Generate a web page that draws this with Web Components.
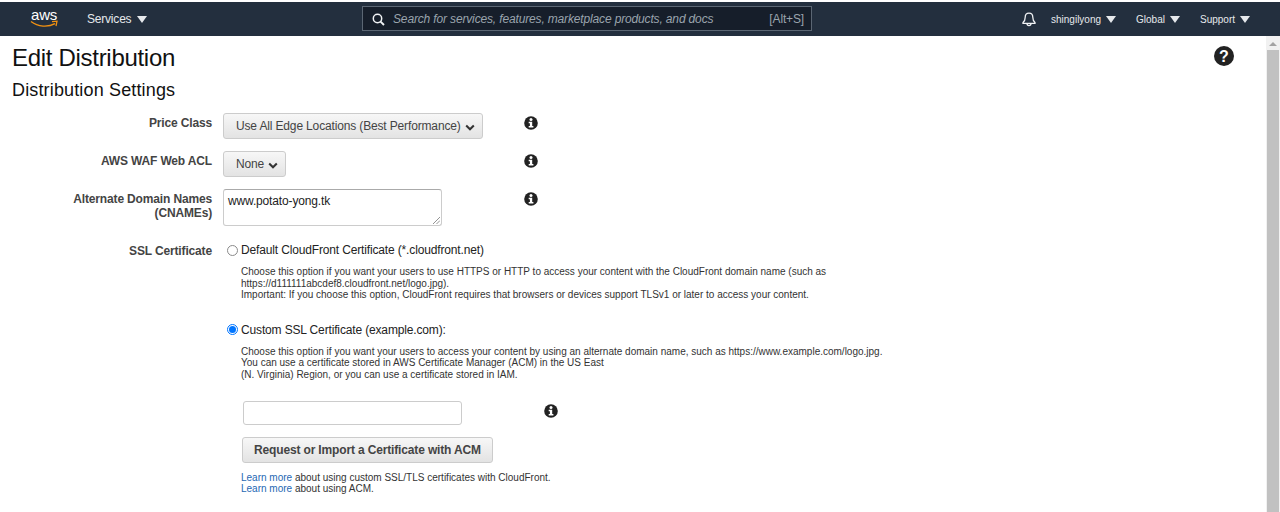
<!DOCTYPE html>
<html>
<head>
<meta charset="utf-8">
<title>Edit Distribution</title>
<style>
  html, body { margin: 0; height: 512px; overflow: hidden; background: #fff; }
  body { font-family: "Liberation Sans", Arial, sans-serif; display: flex; flex-direction: column; padding-top: 2px; box-sizing: border-box; }
</style>
</head>
<body>
<aws-nav></aws-nav>
<page-shell>
  <page-title></page-title>
  <form-row label="Price Class"><aws-select>Use All Edge Locations (Best Performance)</aws-select></form-row>
  <form-row label="AWS WAF Web ACL"><aws-select>None</aws-select></form-row>
  <form-row label="Alternate Domain Names (CNAMEs)"><cname-box>www.potato-yong.tk</cname-box></form-row>
  <ssl-section></ssl-section>
</page-shell>

<script>
const infoSvg = `<svg width="14" height="14" viewBox="0 0 14 14"><circle cx="7" cy="7" r="6.8" fill="#222"/><circle cx="7" cy="3.5" r="1.5" fill="#fff"/><path d="M4.7 5.8H8.2V10H9.4V11.5H4.7V10H5.900V7.300H4.700Z" fill="#fff"/></svg>`;
const caretSvg = `<svg width="10" height="7" viewBox="0 0 10 7"><path d="M1.2 1.6 5 5.2 8.8 1.6" fill="none" stroke="#333" stroke-width="2.1"/></svg>`;

class NavMenu extends HTMLElement {
  constructor() {
    super();
    this.attachShadow({ mode: "open" }).innerHTML = `
      <style>
        :host { display: inline-flex; align-items: center; gap: var(--menu-gap, 5px); color: #e6e9ec; font-size: var(--menu-size, 10px); letter-spacing: var(--menu-track, 0); }
        i { width: 0; height: 0; border-left: 5px solid transparent; border-right: 5px solid transparent; border-top: 7px solid #e6e9ec; margin-top: 1px; }
      </style>
      <slot></slot><i></i>`;
  }
}

class AwsNav extends HTMLElement {
  constructor() {
    super();
    this.attachShadow({ mode: "open" }).innerHTML = `
      <style>
        :host { display: flex; align-items: center; height: 34px; background: #232f3e; flex: none; position: relative; }
        .logo { margin-left: 30px; width: 30px; display: block; position: relative; height: 24px; }
        .logo span { position: absolute; left: 1px; top: 0; color: #fff; font-size: 15px; letter-spacing: -.2px; line-height: 15px; }
        .logo svg { position: absolute; left: 0; top: 13px; }
        .services { margin-left: 27px; --menu-size: 12px; --menu-track: -.2px; --menu-gap: 6px; }
        .search { position: absolute; left: 362px; top: 4px; width: 450px; height: 25px; box-sizing: border-box; border: 1px solid #5b6673; background: #161e2a; display: flex; align-items: center; padding: 0 7px 0 9px; color: #9aa4ad; font-size: 12px; letter-spacing: -.15px; }
        .search svg { margin: 2px 8px 0 0; }
        .search em { flex: 1; }
        .right { margin-left: auto; display: flex; align-items: center; }
        .bell { margin-right: 15px; display: block; }
        .gap1 { margin-right: 20px; }
        .gap2 { margin-right: 20px; }
        .gap3 { margin-right: 30px; }
      </style>
      <div class="logo"><span>aws</span>
        <svg width="28" height="9" viewBox="0 0 28 9"><path d="M1 1.5C8 7 18 7.5 25 3.6" fill="none" stroke="#f29111" stroke-width="1.4"/><path d="M22 1.7 27 1.2 26 6" fill="none" stroke="#f29111" stroke-width="1.3"/></svg>
      </div>
      <nav-menu class="services">Services</nav-menu>
      <div class="search">
        <svg width="13" height="13" viewBox="0 0 13 13"><circle cx="5.5" cy="5.5" r="4.2" fill="none" stroke="#f0f2f4" stroke-width="1.5"/><path d="M8.6 8.6 12 12" stroke="#f0f2f4" stroke-width="1.9"/></svg>
        <em>Search for services, features, marketplace products, and docs</em><span>[Alt+S]</span>
      </div>
      <div class="right">
        <svg class="bell" width="14" height="15" viewBox="0 0 14 15"><path d="M7 1.2C4.5 1.2 3.2 3 3.2 5.3 3.2 8 2.5 9.4 1 10.6V11.4H13V10.6C11.5 9.4 10.8 8 10.8 5.3 10.8 3 9.500 1.200 7 1.200ZM5 11.600C5 14.200 9 14.200 9 11.600" fill="none" stroke="#f0f2f4" stroke-width="1.300"/></svg>
        <nav-menu class="gap1">shingilyong</nav-menu>
        <nav-menu class="gap2">Global</nav-menu>
        <nav-menu class="gap3">Support</nav-menu>
      </div>`;
  }
}

class PageShell extends HTMLElement {
  constructor() {
    super();
    this.attachShadow({ mode: "open" }).innerHTML = `
      <style>
        :host { display: flex; flex: 1; min-height: 0; }
        main { flex: 1; min-width: 0; }
        .bar { width: 14px; background: #f1f1f1; flex: none; display: flex; flex-direction: column; align-items: center; }
        .up { width: 0; height: 0; border-left: 4px solid transparent; border-right: 4px solid transparent; border-bottom: 4px solid #a3a3a3; margin: 6px 0 4px; }
        .thumb { width: 12px; flex: 1; background: #c1c1c1; }
      </style>
      <main><slot></slot></main>
      <div class="bar"><div class="up"></div><div class="thumb"></div></div>`;
  }
}

class PageTitle extends HTMLElement {
  constructor() {
    super();
    this.attachShadow({ mode: "open" }).innerHTML = `
      <style>
        :host { display: block; padding: 8px 32px 0 12px; color: #111; }
        .top { display: flex; justify-content: space-between; align-items: flex-start; }
        h1 { margin: 0; font-size: 24px; font-weight: 400; line-height: 28px; letter-spacing: -.3px; }
        h2 { margin: 7px 0 0; font-size: 18px; font-weight: 400; line-height: 22px; letter-spacing: .15px; }
        svg { display: block; margin-top: 2px; }
      </style>
      <div class="top"><h1>Edit Distribution</h1>
        <svg width="20" height="20" viewBox="0 0 20 20"><circle cx="10" cy="10" r="10" fill="#222"/><text x="10" y="15.500" text-anchor="middle" font-family="Liberation Sans" font-weight="700" font-size="16" fill="#fff">?</text></svg>
      </div>
      <h2>Distribution Settings</h2>`;
  }
}

class FormRow extends HTMLElement {
  constructor() {
    super();
    this.attachShadow({ mode: "open" }).innerHTML = `
      <style>
        :host { display: grid; grid-template-columns: 212px 261px 14px; column-gap: 11px; padding-top: 12px; }
        .label { font-size: 12px; font-weight: 700; color: #444; text-align: right; line-height: 14px; padding: 3px 0 0 60px; letter-spacing: -.15px; }
        .info { margin-left: 29px; width: 14px; height: 14px; padding-top: 3px; }
        .ctl { grid-column: 2; }
        svg { display: block; }
      </style>
      <div class="label">${this.getAttribute("label")}</div>
      <div class="ctl"><slot></slot></div>
      <div class="info">${infoSvg}</div>`;
  }
}

class AwsSelect extends HTMLElement {
  constructor() {
    super();
    this.attachShadow({ mode: "open" }).innerHTML = `
      <style>
        :host { display: inline-flex; align-items: center; gap: 4px; height: 26px; box-sizing: border-box; padding: 0 7px 0 12px; border: 1px solid #ccc; border-radius: 3px; background: linear-gradient(#f7f7f7, #e3e3e3); color: #444; font-size: 12px; letter-spacing: -.15px; white-space: nowrap; vertical-align: top; }
        svg { display: block; margin-top: 2px; }
      </style>
      <slot></slot>${caretSvg}`;
  }
}

class CnameBox extends HTMLElement {
  constructor() {
    super();
    this.attachShadow({ mode: "open" }).innerHTML = `
      <style>
        :host { display: block; position: relative; width: 219px; height: 37px; box-sizing: border-box; border: 1px solid #ccc; border-top-color: #aaa; border-radius: 3px; padding: 4px 4px; font-size: 12px; letter-spacing: -.15px; line-height: 14px; color: #222; }
        svg { position: absolute; right: 1px; bottom: 1px; }
      </style>
      <slot></slot>
      <svg width="8" height="8" viewBox="0 0 8 8"><path d="M1 8 8 1M4.500 8 8 4.500" stroke="#888" stroke-width=".9"/></svg>`;
  }
}

class SslOption extends HTMLElement {
  constructor() {
    super();
    const on = this.hasAttribute("checked");
    this.attachShadow({ mode: "open" }).innerHTML = `
      <style>
        :host { display: block; }
        .head { display: flex; align-items: center; height: 14px; font-size: 12px; letter-spacing: -.15px; color: #222; white-space: nowrap; }
        .r { width: 11px; height: 11px; box-sizing: border-box; border-radius: 50%; border: 1px solid ${on ? "#0075ff" : "#8a8a8a"}; background: #fff; margin: 0 3px 0 4px; display: flex; align-items: center; justify-content: center; flex: none; }
        .r i { width: 7px; height: 7px; border-radius: 50%; background: ${on ? "#0075ff" : "transparent"}; }
        .body { margin: 9px 0 0 18px; font-size: 10px; line-height: 11.500px; color: #333; white-space: nowrap; }
      </style>
      <div class="head"><span class="r"><i></i></span>${this.getAttribute("label")}</div>
      <div class="body"><slot></slot></div>`;
  }
}

class SslSection extends HTMLElement {
  constructor() {
    super();
    this.attachShadow({ mode: "open" }).innerHTML = `
      <style>
        :host { display: grid; grid-template-columns: 212px 1fr; column-gap: 11px; padding-top: 17px; }
        .label { font-size: 12px; font-weight: 700; color: #444; text-align: right; line-height: 14px; padding-top: 1px; letter-spacing: -.15px; }
        ssl-option + ssl-option { margin-top: 22px; }
        .cert { display: flex; margin: 21px 0 0 20px; height: 24px; align-items: center; }
        .input { width: 219px; height: 24px; box-sizing: border-box; border: 1px solid #ccc; border-radius: 3px; background: #fff; }
        .cert svg { margin: 0 0 4px 82px; display: block; }
        .btn { display: inline-block; margin: 12px 0 0 19px; height: 26px; line-height: 24px; box-sizing: border-box; padding: 0 11px; border: 1px solid #ccc; border-radius: 3px; background: linear-gradient(#f7f7f7, #e3e3e3); font-size: 12px; font-weight: 700; letter-spacing: -.15px; color: #444; white-space: nowrap; }
        .more { margin: 9px 0 0 18px; font-size: 10px; line-height: 11px; color: #333; white-space: nowrap; }
        a { color: #1f68b3; text-decoration: none; }
      </style>
      <div class="label">SSL Certificate</div>
      <div>
        <ssl-option label="Default CloudFront Certificate (*.cloudfront.net)">
          Choose this option if you want your users to use HTTPS or HTTP to access your content with the CloudFront domain name (such as<br>
          https://d111111abcdef8.cloudfront.net/logo.jpg).<br>
          Important: If you choose this option, CloudFront requires that browsers or devices support TLSv1 or later to access your content.
        </ssl-option>
        <ssl-option label="Custom SSL Certificate (example.com):" checked>
          Choose this option if you want your users to access your content by using an alternate domain name, such as https://www.example.com/logo.jpg.<br>
          You can use a certificate stored in AWS Certificate Manager (ACM) in the US East<br>
          (N. Virginia) Region, or you can use a certificate stored in IAM.
        </ssl-option>
        <div class="cert"><div class="input"></div>${infoSvg}</div>
        <div class="btn">Request or Import a Certificate with ACM</div>
        <div class="more"><a href="#">Learn more</a> about using custom SSL/TLS certificates with CloudFront.<br><a href="#">Learn more</a> about using ACM.</div>
      </div>`;
  }
}

customElements.define("nav-menu", NavMenu);
customElements.define("aws-nav", AwsNav);
customElements.define("page-shell", PageShell);
customElements.define("page-title", PageTitle);
customElements.define("form-row", FormRow);
customElements.define("aws-select", AwsSelect);
customElements.define("cname-box", CnameBox);
customElements.define("ssl-option", SslOption);
customElements.define("ssl-section", SslSection);
</script>
</body>
</html>
